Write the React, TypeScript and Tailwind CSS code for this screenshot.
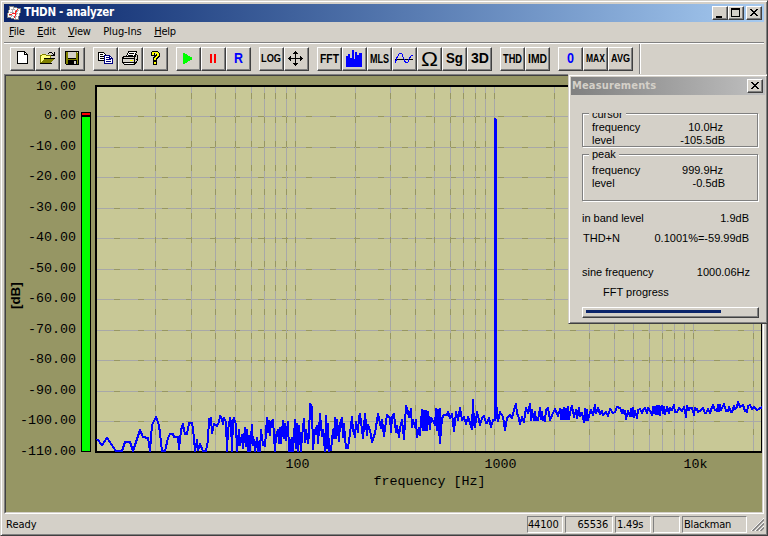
import type { ReactNode } from "react";

const ui = "font-['DejaVu_Sans_Condensed','DejaVu_Sans',sans-serif]";
const mono = "font-['Liberation_Mono',monospace]";
const sans = "font-['Liberation_Sans',sans-serif]";

const LEVELS = [
  { y: 116, label: "0.00" },
  { y: 147, label: "-10.00" },
  { y: 177, label: "-20.00" },
  { y: 208, label: "-30.00" },
  { y: 238, label: "-40.00" },
  { y: 269, label: "-50.00" },
  { y: 299, label: "-60.00" },
  { y: 330, label: "-70.00" },
  { y: 360, label: "-80.00" },
  { y: 391, label: "-90.00" },
  { y: 421, label: "-100.00" },
];

const FREQS = [
  155, 191, 215, 235, 251, 264, 275, 286, 295, 355, 390, 415, 434, 450, 463,
  475, 485, 494, 554, 589, 614, 633, 649, 662, 674, 684, 693, 753,
];

const TRACE =
  "97,439 102,445 107,438 116,451 122,451 125,442 130,442 133,451 140,430 143,437 148,438 150,451 152,425 156,417 159,425 162,451 165,451 168,438 170,434 173,434 174,437 178,437 179,449 181,430 183,424 185,434 187,434 189,423 192,423 193,428 195,451 197,440 198,450 200,444 203,451 206,451 208,440 209,419 211,418 212,433 214,424 217,426 219,422 220,416 222,419 223,424 224,418 226,422 227,451 228,430 230,418 231,422 232,451 233,420 234,418 236,425 237,451 239,430 240,445 242,435 243,448 245,428 246,446 247,430 248,451 249,436 250,451 252,425 253,445 254,440 255,451 257,438 258,451 259,442 260,451 261,430 263,445 265,446 267,418 268,432 269,421 270,435 271,422 273,420 275,451 276,436 278,430 279,443 280,428 281,443 283,421 284,438 285,424 286,440 288,422 289,451 290,440 291,451 292,438 293,451 295,420 296,448 297,424 298,451 299,426 301,451 302,436 304,419 305,442 306,430 308,443 309,436 310,404 312,407 313,449 315,430 317,426 318,443 319,430 320,414 322,436 323,430 325,451 326,416 327,448 328,424 329,451 331,450 333,430 334,438 335,418 336,438 337,420 339,441 340,424 342,418 343,437 344,424 345,437 346,448 348,448 350,433 352,417 353,430 355,437 356,422 358,432 359,416 360,414 363,438 365,414 367,435 368,425 370,430 372,442 375,433 378,414 381,428 382,420 384,436 387,415 390,418 391,432 392,417 394,414 396,432 397,426 399,437 400,428 402,420 404,439 406,406 408,412 409,417 411,409 412,427 413,420 415,427 416,420 417,437 419,428 420,435 422,410 423,430 424,411 425,430 426,411 427,430 428,412 430,429 431,418 433,421 435,425 436,409 437,430 438,410 439,435 440,409 440,443 442,418 444,415 447,415 448,412 450,418 452,414 454,431 456,412 458,420 460,408 462,420 464,417 466,424 468,417 470,423 472,429 473,400 474,425 475,427 477,412 479,420 480,425 482,418 484,416 486,423 487,423 489,418 491,427 493,420 495,420 495.500,300 496,400 497,414 498,421 500,412 503,417 505,430 507,418 510,415 512,418 514,410 516,404 517,414 518,415 520,424 522,417 524,422 526,408 528,413 530,404 531,420 532,410 534,420 535,412 536,420 538,420 540,408 541,419 542,412 543,420 545,421 546,410 548,408 550,420 553,413 555,409 558,416 560,409 561,419 562,410 563,419 564,408 565,419 566,409 567,419 568,407 569,419 571,408 572,406 574,417 576,410 577,418 579,408 580,416 582,413 584,422 585,409 586,420 587,410 588,420 590,412 591,410 593,415 595,405 596,413 597,410 598,408 600,414 602,411 603,415 606,412 608,416 610,409 613,413 615,412 617,407 620,408 622,413 623,410 624,413 625,411 626,419 628,411 630,416 631,409 632,416 633,408 634,417 635,411 637,418 638,410 640,409 642,413 643,410 645,408 647,413 648,408 650,411 652,415 653,407 654,413 655,407 656,414 657,406 658,414 659,406 660,415 661,407 662,406 663,413 664,407 665,414 667,407 669,413 670,408 672,410 674,405 675,412 677,412 679,408 682,411 684,407 685,411 686,417 687,406 689,410 690,408 692,408 694,415 695,408 697,409 698,412 700,411 703,408 705,413 706,413 708,409 710,413 712,407 713,405 715,410 717,411 718,405 719,411 720,405 721,410 722,408 724,404 726,411 728,411 729,407 731,412 732,412 734,406 735,409 737,407 738,402 740,407 743,405 745,411 747,412 748,406 750,405 752,409 754,407 757,410 759,409 762,407";

/* Raised grey push button used by the title bars */
function CaptionButton({ children }: { children: ReactNode }) {
  return (
    <button
      type="button"
      className="h-[14px] w-4 shrink-0 bg-[#d4d0c8] border border-t-white border-l-white border-r-[#404040] border-b-[#404040] shadow-[inset_-1px_-1px_0_#808080]"
    >
      <svg width="14" height="12" shapeRendering="crispEdges" fill="#000">
        {children}
      </svg>
    </button>
  );
}

function CloseGlyph() {
  return (
    <path d="M3 2h2v1h1v1h2v-1h1v-1h2v1h-1v1h-1v1h-1v1h1v1h1v1h1v1h-2v-1h-1v-1h-2v1h-1v1h-2v-1h1v-1h1v-1h1v-1h-1v-1h-1v-1h-1z" />
  );
}

function ToolButton({ children }: { children: ReactNode }) {
  return (
    <button
      type="button"
      className="h-6 w-[25px] shrink-0 bg-[#d4d0c8] border border-t-white border-l-white border-r-[#404040] border-b-[#404040] shadow-[inset_-1px_-1px_0_#808080]"
    >
      <svg
        className="-m-px block overflow-visible"
        width="25"
        height="24"
        shapeRendering="crispEdges"
      >
        {children}
      </svg>
    </button>
  );
}

interface GlyphTextProps {
  text: string;
  x: number;
  y?: number;
  width: number;
  size?: number;
  color?: string;
  weight?: number;
}

function GlyphText({ text, x, y = 16, width, size = 12, color = "#000", weight = 700 }: GlyphTextProps) {
  return (
    <text
      x={x}
      y={y}
      textLength={width}
      lengthAdjust="spacingAndGlyphs"
      fontSize={size}
      fontWeight={weight}
      fill={color}
      className={sans}
    >
      {text}
    </text>
  );
}

function Toolbar() {
  return (
    <div className="flex h-[30px] shrink-0 items-start pl-[6px] pt-[3px]">
      <div className="flex gap-2">
        <div className="flex">
          <ToolButton>
            <path d="M7.5 4.500h7l3 3v9h-10z" fill="#fff" stroke="#000" />
            <path d="M14.500 4.500v3h3" fill="none" stroke="#000" />
          </ToolButton>
          <ToolButton>
            <path d="M5 8h1v-1h4v1h6v4h-7l-3 5h-1z" fill="#ffff80" />
            <path d="M5.500 16.500v-8h1l1-1h3l1 1h4v3" fill="none" stroke="#808000" />
            <path d="M6 16l4-5h10l-4 5z" fill="#808000" />
            <path d="M5 16h12v1h-12zM9 11h11v1h-11z" />
            <path d="M13 6h1v-1h3v1h1v1h1v-2h1v4h-4v-1h2v-1h-1v-1h-3v1h-1z" />
          </ToolButton>
          <ToolButton>
            <path d="M5 4h14v14h-13v-1h-1z" />
            <path d="M6 5h2v7h8v-7h2v12h-12z" fill="#808000" />
            <path d="M8 5h8v6h-8zM17 5h1v1h-1z" fill="#d4d0c8" />
            <path d="M8 13h9v4h-9z" />
            <path d="M14 14h2v3h-2z" fill="#d4d0c8" />
          </ToolButton>
        </div>
        <div className="flex">
          <ToolButton>
            <path d="M5.500 5.500h5l3 3v5h-8z" fill="#fff" stroke="#000" />
            <path d="M7 7h3v1h-3zM7 9h4v1h-4zM7 11h4v1h-4z" />
            <path d="M11.500 8.500h5l3 3v5h-8z" fill="#fff" stroke="#000080" />
            <path d="M13 10h3v1h-3zM13 12h5v1h-5zM13 14h5v1h-5zM16 9h1v2h2v1h-3z" fill="#000080" />
          </ToolButton>
          <ToolButton>
            <path d="M8.500 9.500l2-5h8l-2 5z" fill="#fff" stroke="#000" />
            <path d="M11 6h5v1h-5zM10 8h5v1h-5z" />
            <path d="M4.500 10.500l2-1h10l2-2 1 1v5l-3 4h-10l-2-2z" fill="#d4d0c8" stroke="#000" />
            <path d="M5 11h11v1h-11zM5 15h11v1h-11zM16 10h1v7h-1zM17 9h1v1h-1zM18 12h1v1h-1z" />
            <path d="M12 13h3v1h-3z" fill="#ffff00" />
            <path d="M7 16h8v1h-8z" fill="#fff" />
          </ToolButton>
          <ToolButton>
            <path d="M9 4h6v1h1v1h1v4h-1v1h-1v1h-1v2h-4v-4h1v-1h1v-1h1v-2h-1v3h-4v-4h1v-1h1zM10 14h4v4h-4z" />
            <path d="M9 5h6v1h1v3h-1v1h-1v1h-1v2h-2v-2h1v-1h1v-1h1v-2h-1v-1h-2v2h-2zM11 15h2v2h-2z" fill="#ffff00" />
          </ToolButton>
        </div>
        <div className="flex">
          <ToolButton>
            <path d="M7 6h2v1h2v1h1v1h2v1h2v3h-2v1h-2v1h-1v1h-2v1h-2z" fill="#00ff00" />
          </ToolButton>
          <ToolButton>
            <path d="M9 7h2v9h-2zM13 7h2v9h-2z" fill="#ff0000" />
          </ToolButton>
          <ToolButton>
            <GlyphText text="R" x={8} width={9} size={14} color="#0000ff" />
          </ToolButton>
        </div>
        <div className="flex">
          <ToolButton>
            <GlyphText text="LOG" x={2} y={15} width={20} size={10.5} />
          </ToolButton>
          <ToolButton>
            <path d="M11 4h1v1h1v1h1v1h-2v4h4v-2h1v1h1v1h1v1h-1v1h-1v1h-1v-2h-4v4h2v1h-1v1h-1v1h-1v-1h-1v-1h-1v-1h2v-4h-4v2h-1v-1h-1v-1h-1v-1h1v-1h1v-1h1v2h4v-4h-2v-1h1v-1h1z" />
          </ToolButton>
        </div>
        <div className="flex">
          <ToolButton>
            <GlyphText text="FFT" x={3} width={19} />
          </ToolButton>
          <ToolButton>
            <path d="M4 9h2v-2h2v4h2v-8h2v9h1v-7h2v3h2v-2h3v14h-16z" fill="#0000ff" />
          </ToolButton>
          <ToolButton>
            <GlyphText text="MLS" x={3} width={19} />
          </ToolButton>
          <ToolButton>
            <path d="M3 12h18v1h-18z" />
            <path
              d="M3.500 15.500v-2h1v-2l1-2 1-1v-1l1-1h2l1 1v2l1 1 1 3 1 2h2l1-1v-2l1-1 1-2 1-1h1"
              fill="none"
              stroke="#0000ff"
            />
          </ToolButton>
          <ToolButton>
            <GlyphText text="Ω" x={4} y={19} width={17} size={21} weight={400} />
          </ToolButton>
          <ToolButton>
            <GlyphText text="Sg" x={4} width={17} size={14} />
          </ToolButton>
          <ToolButton>
            <GlyphText text="3D" x={4} width={18} size={14} />
          </ToolButton>
        </div>
        <div className="flex">
          <ToolButton>
            <GlyphText text="THD" x={3} width={19} size={13} />
          </ToolButton>
          <ToolButton>
            <GlyphText text="IMD" x={3} width={19} size={13} />
          </ToolButton>
        </div>
        <div className="flex">
          <ToolButton>
            <GlyphText text="0" x={9} width={7} size={14} color="#0000ff" />
          </ToolButton>
          <ToolButton>
            <GlyphText text="MAX" x={3} y={15} width={19} size={11.5} />
          </ToolButton>
          <ToolButton>
            <GlyphText text="AVG" x={3} y={15} width={19} size={11.5} />
          </ToolButton>
        </div>
      </div>
      <div className="-mt-[3px] ml-[6px] h-[30px] w-[2px] border-l border-r border-l-[#808080] border-r-white" />
    </div>
  );
}

function Spectrum() {
  return (
    <svg
      className="block"
      width="756"
      height="436"
      viewBox="6 76 756 436"
      shapeRendering="crispEdges"
    >
      <rect x="6" y="76" width="756" height="436" fill="#969664" />
      <rect x="97" y="87" width="665" height="364" fill="#c8c896" />

      {/* Grid */}
      {LEVELS.map(({ y }) => (
        <g key={y}>
          <path d={`M97 ${y + 0.5}H761`} stroke="#a8a8a8" />
          <path d={`M114 ${y + 0.5}H761`} stroke="#969664" strokeDasharray="6 18" />
        </g>
      ))}
      {FREQS.map((x) => (
        <g key={x}>
          <path d={`M${x + 0.5} 87V451`} stroke="#a8a8a8" />
          <path d={`M${x + 0.5} 93V451`} stroke="#969664" strokeDasharray="6 18" />
        </g>
      ))}

      {/* Plot frame */}
      <path d="M95 85h667v2h-665v364h664v-364h1v366h-667z" fill="#000" fillRule="evenodd" />

      {/* Level meter */}
      <rect x="81" y="112" width="10" height="340" fill="#000" />
      <rect x="82" y="113" width="8" height="2" fill="#ff0000" />
      <rect x="82" y="117" width="8" height="334" fill="#00ff00" />

      <polyline points={TRACE} fill="none" stroke="#0000ff" strokeWidth="2" strokeLinejoin="round" />
      <path d="M494 118h2v1h1v300h-3z" fill="#0000ff" />

      <g className={mono} fontSize="13.33" fill="#000">
        <text x="76" y="89.500" textAnchor="end">10.00</text>
        {LEVELS.map(({ y, label }) => (
          <text key={y} x="76" y={y + 3} textAnchor="end">
            {label}
          </text>
        ))}
        <text x="76" y="455" textAnchor="end">-110.00</text>
        <text x="285.500" y="468">100</text>
        <text x="484.500" y="468">1000</text>
        <text x="683.500" y="468">10k</text>
        <text x="373.500" y="485">frequency [Hz]</text>
      </g>
      <text
        className={sans}
        fontSize="13.33"
        fontWeight="700"
        transform="translate(20 309) rotate(-90)"
      >
        [dB]
      </text>
    </svg>
  );
}

function Row({ label, value, className }: { label: string; value: string; className: string }) {
  return (
    <div className={`flex justify-between leading-[13px] ${className}`}>
      <span>{label}</span>
      <span>{value}</span>
    </div>
  );
}

function Measurements() {
  const group =
    "relative border border-[#808080] shadow-[inset_1px_1px_0_#fff,1px_1px_0_#fff]";
  return (
    <div
      className={`absolute left-[567px] top-[73px] flex h-[250px] w-[200px] flex-col border border-t-[#d4d0c8] border-l-[#d4d0c8] border-r-[#404040] border-b-[#404040] bg-[#d4d0c8] p-[2px] text-[11px] shadow-[inset_1px_1px_0_#fff,inset_-1px_-1px_0_#808080] ${sans}`}
    >
      <div className="flex h-[18px] w-[194px] shrink-0 items-center justify-between bg-linear-to-r from-[#808080] to-[#c0c0c0] pl-px pr-[2px]">
        <span className="font-['DejaVu_Sans_Condensed',sans-serif] text-[11px] font-bold tracking-[0.150px] text-[#d4d0c8]">
          Measurements
        </span>
        <CaptionButton>
          <CloseGlyph />
        </CaptionButton>
      </div>

      <div className="ml-[11px] w-[176px]">
        <div className={`${group} mt-[18px] h-[34px]`}>
          <div className="absolute -top-[5px] left-[6px] h-[11px] bg-[#d4d0c8] px-[3px] leading-[11px]">
            cursor
          </div>
          {/* hides the tops of the caption letters */}
          <div className="absolute -top-[5px] left-[6px] h-[4px] w-[40px] bg-[#d4d0c8]" />
          <Row label="frequency" value="10.0Hz" className="relative pl-[9px] pr-[34px] pt-[7px]" />
          <Row label="level" value="-105.5dB" className="relative pl-[9px] pr-[32px]" />
        </div>
        <div className={`${group} mt-[7px] h-[47px]`}>
          <div className="absolute -top-[7px] left-[6px] bg-[#d4d0c8] px-[3px] leading-[13px]">
            peak
          </div>
          <Row label="frequency" value="999.9Hz" className="pl-[9px] pr-[34px] pt-[9px]" />
          <Row label="level" value="-0.5dB" className="pl-[9px] pr-[32px]" />
        </div>
        <Row label="in band level" value="1.9dB" className="mt-[11px] pr-[9px]" />
        <Row label="THD+N" value="0.1001%=-59.99dB" className="mt-[7px] pl-px pr-[9px]" />
        <Row label="sine frequency" value="1000.06Hz" className="mt-[21px] pr-[8px]" />
        <div className="mt-[7px] pl-[21px] leading-[13px]">FFT progress</div>
        <div className="mt-[8px] h-[11px] w-[177px] border border-t-white border-l-white border-r-[#404040] border-b-[#404040] px-[3px] pt-[2px] shadow-[inset_-1px_-1px_0_#808080]">
          <div className="h-[3px] w-[135px] bg-[#0a246a]" />
        </div>
      </div>
    </div>
  );
}

function Pane({ children, className }: { children?: ReactNode; className: string }) {
  return (
    <div
      className={`h-[17px] shrink-0 border border-t-[#808080] border-l-[#808080] border-r-white border-b-white leading-[15px] ${className}`}
    >
      {children}
    </div>
  );
}

export default function App() {
  return (
    <div
      className={`relative flex h-[536px] w-[768px] flex-col overflow-hidden whitespace-nowrap border border-t-[#d4d0c8] border-l-[#d4d0c8] border-r-[#404040] border-b-[#404040] bg-[#d4d0c8] p-[3px] pb-0 text-[11px] text-black shadow-[inset_1px_1px_0_#fff,inset_-1px_-1px_0_#808080] ${ui}`}
    >
      {/* Title bar */}
      <div className="flex h-[18px] w-[760px] shrink-0 items-center bg-linear-to-r from-[#0a246a] to-[#a6caf0] pl-[2px] pr-[2px]">
        <svg width="16" height="16" shapeRendering="crispEdges">
          <path d="M4 1l11 3-3 11-11-3z" fill="#fff" stroke="#808080" />
          <path d="M5 4l8 2M4 7l8 2M3 10l8 2M8 2l-3 10M12 3l-3 11" stroke="#b0b0b0" fill="none" />
          <path d="M3 9h3l3-1 3-4M8 8l2 1-2 4" stroke="#ff2020" fill="none" />
        </svg>
        <span className="ml-[2px] flex-1 text-[11.5px] font-bold tracking-[-0.300px] text-white">
          THDN - analyzer
        </span>
        <CaptionButton>
          <path d="M3 9h6v2h-6z" />
        </CaptionButton>
        <CaptionButton>
          <path d="M2 1h9v9h-9zM3 3v6h7v-6z" fillRule="evenodd" />
        </CaptionButton>
        <div className="w-[2px]" />
        <CaptionButton>
          <CloseGlyph />
        </CaptionButton>
      </div>

      {/* Menu */}
      <div className="flex h-[20px] w-[760px] shrink-0 items-center gap-[12.500px] pl-[5px] pt-px tracking-[-0.200px]">
        <span><u>F</u>ile</span>
        <span><u>E</u>dit</span>
        <span><u>V</u>iew</span>
        <span className="tracking-[-0.100px]">Plug-Ins</span>
        <span><u>H</u>elp</span>
      </div>
      <div className="h-[2px] w-[760px] shrink-0 border-t border-b border-t-[#808080] border-b-white" />

      <Toolbar />

      {/* Sunken client area */}
      <div className="h-[440px] w-[760px] shrink-0 border border-t-[#808080] border-l-[#808080] border-r-white border-b-white">
        <div className="h-[438px] w-[758px] border border-t-[#404040] border-l-[#404040] border-r-[#d4d0c8] border-b-[#d4d0c8]">
          <Spectrum />
        </div>
      </div>

      {/* Status bar */}
      <div className="flex h-[20px] w-[760px] shrink-0 pt-[2px]">
        <span className="flex-1 pl-[2px] leading-[17px]">Ready</span>
        <div className="flex gap-[2px] tracking-[-0.200px]">
          <Pane className="w-[36px] pr-[4px] text-right">44100</Pane>
          <Pane className="w-[48px] pr-[4px] text-right">65536</Pane>
          <Pane className="w-[36px] pl-px">1.49s</Pane>
          <Pane className="w-[27px]" />
          <Pane className="w-[65px] pl-px">Blackman</Pane>
        </div>
        <svg className="ml-[4px] mt-[2px]" width="13" height="13">
          <path d="M0 13L13 0M4 13L13 4M8 13l5-5" stroke="#fff" />
          <path d="M1.500 13L13 1.500M5.500 13L13 5.500M9.500 13l3.500-3.500" stroke="#808080" strokeWidth="1.500" />
        </svg>
      </div>

      <Measurements />
    </div>
  );
}
